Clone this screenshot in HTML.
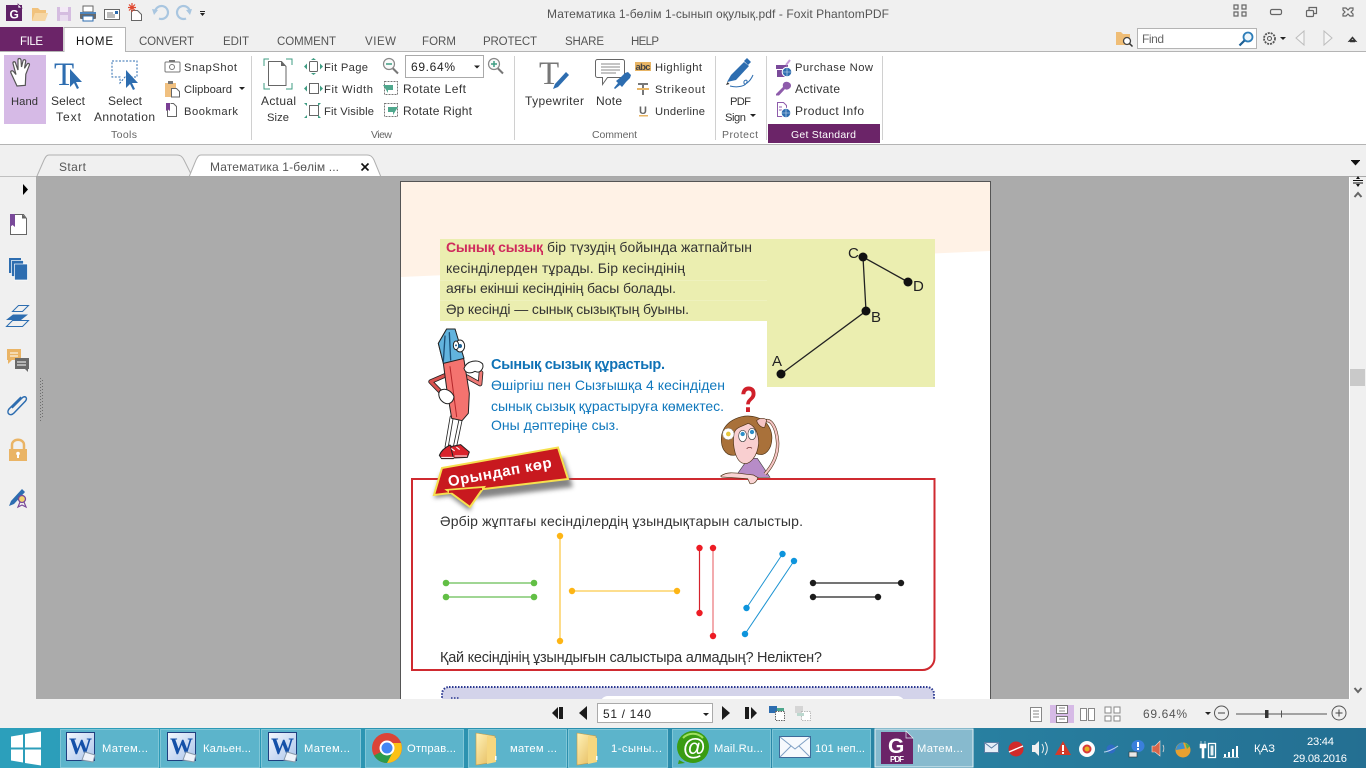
<!DOCTYPE html>
<html><head><meta charset="utf-8"><title>Foxit PhantomPDF</title>
<style>
html,body{margin:0;padding:0;width:1366px;height:768px;overflow:hidden;background:#f0f0f0}
svg{display:block;position:absolute;left:0;top:0}
text{font-family:"Liberation Sans","DejaVu Sans",sans-serif;font-size:12px;fill:#333}
.m{fill:#555;font-size:11.5px}
.n{font-size:11.2px}
.g{fill:#666;font-size:10.5px}
.w{fill:#fff}
.t{font-size:11.2px;fill:#fff}
.d{font-size:14px;fill:#333}
.b{font-size:14px;fill:#1078bd}
.l{fill:none;stroke:#777;stroke-width:1}
</style></head><body>
<svg width="1366" height="768" viewBox="0 0 1366 768" xmlns="http://www.w3.org/2000/svg">
<defs>
<linearGradient id="tb" x1="0" x2="1" y1="0" y2="0"><stop offset="0" stop-color="#2c9fbb"/><stop offset=".5" stop-color="#2b8cab"/><stop offset="1" stop-color="#246f92"/></linearGradient>
<linearGradient id="wd" x1="0" x2="1" y1="0" y2="1"><stop offset="0" stop-color="#f5f8ff"/><stop offset="1" stop-color="#a9c4ea"/></linearGradient>
<linearGradient id="fd" x1="0" x2="1" y1="0" y2="1"><stop offset="0" stop-color="#fff2b8"/><stop offset="1" stop-color="#e3b655"/></linearGradient>
<filter id="bl"><feGaussianBlur stdDeviation="2.5"/></filter>
</defs>

<!-- chrome -->
<rect width="1366" height="768" fill="#f0f0f0"/>
<rect y="52" width="1366" height="92" fill="#fff"/>
<rect y="51" width="1366" height="1" fill="#b4b4b4"/>
<rect y="144" width="1366" height="1" fill="#b4b4b4"/>
<rect x="0" y="27" width="63" height="24" fill="#6b2468"/>
<path d="M64 52V27.500H125.500V52" fill="#fff" stroke="#b4b4b4"/>
<text x="20" y="45" class="w" style="font-size:11.5px" textLength="23">FILE</text>
<text x="76" y="45" textLength="37" style="fill:#111;font-size:11.5px">HOME</text>
<text x="139" y="45" class="m" textLength="55">CONVERT</text>
<text x="223" y="45" class="m" textLength="26">EDIT</text>
<text x="277" y="45" class="m" textLength="59">COMMENT</text>
<text x="365" y="45" class="m" textLength="31">VIEW</text>
<text x="422" y="45" class="m" textLength="34">FORM</text>
<text x="483" y="45" class="m" textLength="54">PROTECT</text>
<text x="565" y="45" class="m" textLength="39">SHARE</text>
<text x="631" y="45" class="m" textLength="28">HELP</text>
<text x="547" y="18" class="m" style="font-size:12px" textLength="342">Математика 1-бөлім 1-сынып оқулық.pdf - Foxit PhantomPDF</text>

<!-- quick access -->
<rect x="6" y="5" width="16" height="16" fill="#5f2166"/><path d="M18 4l4 4h-4z" fill="#fff" stroke="#5f2166" stroke-width=".7"/>
<text x="9.500" y="18.500" style="font-size:12px;font-weight:bold;fill:#fff">G</text>
<path d="M32 21V8h6l2 2h6v3h2l-3 8z" fill="#f1c27d"/><path d="M35 13h13l-3 8H32z" fill="#f6d6a3"/>
<rect x="57" y="7" width="14" height="14" fill="#d5bde0"/><rect x="60" y="7" width="8" height="5" fill="#f3eaf6"/><rect x="60" y="15" width="8" height="6" fill="#e9dcef"/>
<rect x="80" y="12" width="16" height="7" rx="1" fill="#6a6a6a"/><rect x="83" y="6" width="10" height="6" fill="#fff" stroke="#666"/><rect x="83" y="16" width="10" height="5" fill="#fff" stroke="#2d6db0"/><rect x="80" y="12" width="16" height="2" fill="#4d85bd"/>
<rect x="104.500" y="9.500" width="15" height="10" fill="#fff" stroke="#666"/><path d="M107 13h6M107 15h8M107 17h8" stroke="#777"/><rect x="115" y="11" width="3" height="3" fill="#2d6db0"/>
<path d="M131.500 10.500h6l4 4v6h-10z" fill="#fff" stroke="#666"/><path d="M132 3v9M128 7.500h8M129 4.500l6 6M135 4.500l-6 6" stroke="#e0472f" stroke-width="1.200"/>
<path d="M155 12a6.500 6.500 0 1 1 4 6.500" fill="none" stroke="#a9c6e0" stroke-width="2.200"/><path d="M152 9l6 1-4 5z" fill="#a9c6e0"/>
<path d="M190 12a6.500 6.500 0 1 0-4 6.500" fill="none" stroke="#a9c6e0" stroke-width="2.200"/><path d="M192 9l-6 1 4 5z" fill="#a9c6e0"/>
<path d="M200 11h5v1h-5zM200 13h5l-2.500 3z" fill="#222"/>

<!-- window buttons -->
<g fill="none" stroke="#666" stroke-width="1.200">
<path d="M1234 5h4v4h-4zM1242 5h4v4h-4zM1234 12h4v4h-4zM1242 12h4v4h-4z"/>
<rect x="1270.500" y="9.500" width="11" height="5" rx="1.500"/>
<rect x="1306.500" y="10.500" width="7" height="6" rx="1"/><path d="M1309 10V7.500h7.500v6H1314"/>
<path d="M1343 8h3l2 2 2-2h3v2l-2 2 2 2v2h-3l-2-2-2 2h-3v-2l2-2-2-2z"/>
</g>
<!-- find -->
<path d="M1116 45V32h5l2 2h7v11z" fill="#efbd76"/><circle cx="1127" cy="41" r="3.500" fill="#fff" stroke="#444" stroke-width="1.300"/><path d="M1129.500 43.500l3 3" stroke="#333" stroke-width="1.500"/>
<rect x="1137.500" y="28.500" width="119" height="20" fill="#fff" stroke="#b4b4b4"/>
<text x="1142" y="43" style="fill:#666" textLength="22">Find</text>
<circle cx="1248" cy="37" r="4.500" fill="#eef6fb" stroke="#2d7db8" stroke-width="1.800"/><path d="M1244.500 40.500l-5 5" stroke="#1c5f94" stroke-width="2.200"/>
<circle cx="1269.500" cy="38.500" r="5.500" fill="none" stroke="#555" stroke-width="1.800" stroke-dasharray="2 1"/><circle cx="1269.500" cy="38.500" r="2" fill="none" stroke="#555"/>
<path d="M1280 37h6l-3 3z" fill="#222"/>
<path d="M1304 31l-8 7 8 7z" fill="#f5f5f5" stroke="#bdbdbd"/><path d="M1324 31l8 7-8 7z" fill="#f5f5f5" stroke="#bdbdbd"/>
<path d="M1349.500 41l3-3.500 3 3.500-3-.5z M1350 41.500h5" fill="none" stroke="#333" stroke-width="1.500"/>

<!-- ribbon Hand -->
<rect x="4" y="55" width="42" height="69" fill="#d6bae6"/>
<path d="M17 86l-6-13c-1-2 1-3 2.500-1.500l2.500 3-3-11c-.3-2 2-2.500 2.500-.5l2.500 7V60c0-2 2.500-2 3 0l.5 7 1.500-6c.5-2 3-1.500 2.700.3l-1.200 7 2.500-4c1-1.700 3-.7 2.300 1l-3.500 9-.5 11z" fill="#fff" stroke="#555" stroke-width="1.200"/>
<text x="11" y="105" class="n" textLength="27">Hand</text>
<text x="54" y="85" style="font-family:'Liberation Serif',serif;font-size:33px;fill:#2d6db0">T</text>
<path d="M70 69v18l4-4 3 6 2-1-3-6h6z" fill="#2d6db0"/>
<text x="51" y="105" textLength="34">Select</text><text x="56" y="121" textLength="25">Text</text>
<path d="M112 61h25v16h-12l-5 6v-6h-8z" fill="none" stroke="#2d6db0" stroke-dasharray="2 1.500"/>
<path d="M126 70v18l4-4 3 6 2-1-3-6h6z" fill="#2d6db0"/>
<text x="108" y="105" textLength="34">Select</text><text x="94" y="121" textLength="61">Annotation</text>
<rect x="165" y="62" width="15" height="10" rx="1" fill="none" stroke="#777"/><rect x="169" y="60" width="6" height="2" fill="#777"/><circle cx="172" cy="67" r="2.500" fill="none" stroke="#777"/>
<text x="184" y="71" class="n" textLength="53">SnapShot</text>
<rect x="165" y="83" width="11" height="14" fill="#f0c080"/><rect x="168" y="81" width="5" height="3" fill="#777"/><path d="M171.500 88.500h5l3 3v5.500h-8z" fill="#fff" stroke="#666"/>
<text x="184" y="93" class="n" textLength="48">Clipboard</text><path d="M239 87h6l-3 3z" fill="#222"/>
<path d="M170.500 103.500h3l3 3v10h-9v-10" fill="#fff" stroke="#666"/><path d="M166 103h4v8l-2-1.500-2 1.500z" fill="#7a3f94"/>
<text x="184" y="115" class="n" textLength="54">Bookmark</text>
<text x="111" y="138" class="g" textLength="26">Tools</text>
<rect x="251" y="56" width="1" height="84" fill="#d0d0d0"/>

<!-- View -->
<path d="M264 66v-7h5M286 59h6v6M264 83v6h6M286 89h6v-6" fill="none" stroke="#3f9d83"/>
<path d="M268.500 61.500h13l4.500 5v19h-17.500z" fill="#fff" stroke="#666"/><path d="M281 61l5 5h-5z" fill="#666"/>
<text x="261" y="105" textLength="35">Actual</text><text x="267" y="121" class="n" textLength="22">Size</text>
<rect x="309.500" y="61.500" width="8" height="10" rx="1" fill="#fff" stroke="#666"/><path d="M304 66.500l3-3v6zM323 66.500l-3-3v6zM313.500 58l-2.500 2h5zM313.500 75l-2.500-2h5z" fill="#3f9d83"/>
<text x="324" y="71" class="n" textLength="44">Fit Page</text>
<rect x="309.500" y="83.500" width="9" height="10" fill="#fff" stroke="#666"/><path d="M304 88.500l3-3v6zM323 88.500l-3-3v6z" fill="#3f9d83"/>
<text x="324" y="93" class="n" textLength="49">Fit Width</text>
<rect x="309.500" y="105.500" width="9" height="10" fill="#fff" stroke="#666"/><path d="M304 103h3v3zM321 103h-3v3zM304 118h3v-3zM321 118h-3v-3z" fill="#3f9d83"/>
<text x="324" y="115" class="n" textLength="50">Fit Visible</text>
<circle cx="389" cy="64" r="5.500" fill="#fafafa" stroke="#888" stroke-width="1.200"/><path d="M386 64h6" stroke="#3f9d83" stroke-width="1.500"/><path d="M393 68.500l5 5" stroke="#777" stroke-width="2"/>
<rect x="405.500" y="55.500" width="78" height="22" fill="#fff" stroke="#aaa"/>
<text x="411" y="71" textLength="44" style="fill:#222">69.64%</text><path d="M474 65.500h6l-3 3z" fill="#222"/>
<circle cx="494" cy="64" r="5.500" fill="#fafafa" stroke="#888" stroke-width="1.200"/><path d="M491 64h6M494 61v6" stroke="#3f9d83" stroke-width="1.500"/><path d="M498 68.500l5 5" stroke="#777" stroke-width="2"/>
<rect x="384.500" y="81.500" width="13" height="13" fill="#fff" stroke="#777" stroke-dasharray="2 1"/><path d="M383 85h10v5h-5v3z" fill="#4fa78d"/>
<text x="403" y="93" textLength="63">Rotate Left</text>
<rect x="384.500" y="103.500" width="13" height="13" fill="#fff" stroke="#777" stroke-dasharray="2 1"/><path d="M398 107h-10v5h5v3z" fill="#4fa78d"/>
<text x="403" y="115" textLength="69">Rotate Right</text>
<text x="371" y="138" class="g" textLength="21">View</text>
<rect x="514" y="56" width="1" height="84" fill="#d0d0d0"/>

<!-- Comment -->
<text x="539" y="84" style="font-family:'Liberation Serif',serif;font-size:33px;fill:#777">T</text>
<path d="M553 89l2-5 11-12 3 3-11 12z" fill="#2d6db0"/>
<text x="525" y="105" textLength="59">Typewriter</text>
<path d="M596.500 59.500h25a2 2 0 0 1 2 2v14a2 2 0 0 1-2 2h-15l-5 7v-7h-5a2 2 0 0 1-2-2v-14a2 2 0 0 1 2-2z" fill="#fff" stroke="#666" transform="translate(1 0)"/>
<path d="M601 64h19M601 67h19M601 70h19M601 73h15" stroke="#888"/>
<path d="M614 88l4-5-2-2 5-4 4-4 3-1 3 3-1 3-4 4-4 5-2-2-5 4z" fill="#2d6db0"/>
<text x="596" y="105" textLength="26">Note</text>
<rect x="635" y="62" width="16" height="9" fill="#e8b565"/><text x="635.500" y="70" style="font-size:9.500px;font-weight:bold;fill:#444" textLength="15">abc</text>
<text x="655" y="71" class="n" textLength="47">Highlight</text>
<path d="M638 83h10v2h-4v10h-2V85h-4z" fill="#777"/><rect x="637" y="88" width="12" height="2" fill="#e8b565"/>
<text x="655" y="93" class="n" textLength="50">Strikeout</text>
<text x="639" y="114" style="font-size:11px;font-weight:bold;fill:#666">U</text><rect x="639" y="115" width="9" height="1.500" fill="#e8b565"/>
<text x="655" y="115" class="n" textLength="50">Underline</text>
<text x="592" y="138" class="g" textLength="45">Comment</text>
<rect x="715" y="56" width="1" height="84" fill="#d0d0d0"/>

<!-- Protect -->
<path d="M727 82l4-7 13-13 5 4-13 14z" fill="#2d6db0"/><path d="M744 61l3-3 4 4-3 3z" fill="#2d6db0"/><path d="M726 85l1.500-3 2 2z" fill="#333"/>
<path d="M730 86c8 2 16 0 17-4 1-3-4-2-3 1 0 3 6-1 9-8" fill="none" stroke="#2d6db0" stroke-width="1"/>
<text x="730" y="105" class="n" textLength="21">PDF</text><text x="725" y="121" class="n" textLength="21">Sign</text><path d="M750 114h6l-3 3z" fill="#222"/>
<text x="722" y="138" class="g" textLength="36">Protect</text>
<rect x="766" y="56" width="1" height="84" fill="#d0d0d0"/>

<!-- Purchase -->
<rect x="776" y="65" width="12" height="4" fill="#7a4a9a"/><rect x="777" y="70" width="11" height="7" fill="#7a4a9a"/><path d="M786 65l4-5" stroke="#c39ad6" stroke-width="2"/>
<circle cx="787" cy="72" r="4.800" fill="#2d6db0" stroke="#fff"/><path d="M782.500 72h9M787 67.500v9" stroke="#cfe0f2" stroke-width=".6"/>
<text x="795" y="71" class="n" textLength="78">Purchase Now</text>
<path d="M776 94l7-7c-1-4 2-6 5-5s4 4 2 6-4 2-5 1l-6 6.500h-3z" fill="#8e5cab"/>
<text x="795" y="93" textLength="45">Activate</text>
<path d="M777.500 102.500h6l3 3v11h-9z" fill="#fff" stroke="#8e5cab"/><path d="M779 107h3M779 110h3" stroke="#8e5cab"/>
<circle cx="786" cy="113" r="4.800" fill="#2d6db0" stroke="#fff"/><path d="M781.500 113h9M786 108.500v9" stroke="#cfe0f2" stroke-width=".6"/>
<text x="795" y="115" textLength="69">Product Info</text>
<rect x="768" y="124" width="112" height="19" fill="#6b2468"/>
<text x="791" y="138" class="w" textLength="65" style="font-size:10.5px">Get Standard</text>
<rect x="882" y="56" width="1" height="84" fill="#d0d0d0"/>

<!-- doc tabs -->
<path d="M37 176l7-16c2-4 3-5 5-5h128c3 0 5 1 7 5l8 16" fill="#f0f0f0" stroke="#b0b0b0"/>
<path d="M189 177l7-17c2-4 3-5 5-5h166c3 0 5 1 7 5l7 17z" fill="#fff" stroke="#b0b0b0"/>
<text x="59" y="171" class="m" style="font-size:12px" textLength="27">Start</text>
<text x="210" y="171" class="m" style="font-size:12px" textLength="129">Математика 1-бөлім ...</text>
<path d="M361.500 163.500l7 7M368.500 163.500l-7 7" stroke="#111" stroke-width="1.600"/>
<path d="M1351 160.500h9l-4.500 5z" fill="#111"/><rect x="1351" y="160" width="9" height="1" fill="#111"/>

<!-- doc area -->
<rect x="36" y="177" width="1313" height="522" fill="#ababab"/>
<rect x="1349" y="177" width="1" height="522" fill="#fff"/>
<rect x="0" y="176" width="36" height="1" fill="#c0c0c0"/>
<rect x="36" y="176" width="1330" height="1" fill="#a8a8a8"/>
<path d="M1353 180.500h10M1353 183h10" stroke="#111"/><path d="M1358 176l-2 3h4zM1358 187l-2-3h4z" fill="#111"/>
<path d="M1354.500 197l3.500-4 3.500 4" fill="none" stroke="#666" stroke-width="2"/>
<rect x="1350" y="369" width="15" height="17" fill="#c9c9c9"/>
<path d="M1354.500 688l3.500 4 3.500-4" fill="none" stroke="#666" stroke-width="2"/>
<path d="M40.500 378v43M42.500 380v39" stroke="#6f6f6f" stroke-dasharray="1 2"/>

<!-- left icons -->
<path d="M23 184l5 5.500-5 5.500z" fill="#000"/>
<path d="M10.500 214.500h13l3 4v16h-16z" fill="#fff" stroke="#666"/><path d="M22 214l4.500 4.500H22z" fill="#666"/><path d="M10 214h5v13l-2.500-2-2.500 2z" fill="#7a4a9a"/>
<rect x="9" y="258" width="12" height="15" fill="#2d6db0"/><rect x="11.500" y="260.500" width="12" height="16" fill="#2d6db0" stroke="#fff" stroke-width=".7"/><rect x="14.500" y="264" width="13" height="16" fill="#2d6db0" stroke="#fff" stroke-width=".7"/>
<path d="M7 320l7-5.500h15l-7 5.500z" fill="#2d6db0" transform="translate(-1 0)"/>
<path d="M12.500 311.500l6-6h10l-6 6zM6.500 326.500l6-6h16l-6 6z" fill="none" stroke="#2d6db0" stroke-width="1"/>
<rect x="7" y="349" width="14" height="11" fill="#eab465"/><path d="M8 360v4l4-4z" fill="#eab465"/><path d="M10 353h8M10 356h8" stroke="#fff"/>
<rect x="15" y="358" width="14" height="11" fill="#6a6a6a"/><path d="M25 369l3 3v-3z" fill="#6a6a6a"/><path d="M17 362h9M17 365h9" stroke="#fff"/>
<path d="M12 407l10-10c3-3 6 0 3.500 3L14 412c-4 4-8 0-5-4l12-12" fill="none" stroke="#2d6db0" stroke-width="1.500" transform="translate(0 1)"/>
<rect x="9" y="449" width="18" height="12" fill="#eab465"/><path d="M12 449v-4c0-7 12-7 12 0v4" fill="none" stroke="#eab465" stroke-width="2.500"/><circle cx="18" cy="453.500" r="1.800" fill="#fff"/><rect x="17" y="454" width="2" height="4" fill="#fff"/>
<path d="M9 506l2-5 11-12 3 3-11 12z" fill="#2d6db0"/><circle cx="22" cy="499" r="3.500" fill="#f3d26d" stroke="#7a4a9a" stroke-width="1.300"/><path d="M20 502l-2 5 4-2 4 2-2-5" fill="none" stroke="#7a4a9a" stroke-width="1.200"/>

<!-- PDF page -->
<rect x="400.500" y="181.500" width="590" height="540" fill="#fff" stroke="#555"/>
<path d="M401 182H990V251L401 277z" fill="#fff2e6"/>
<path d="M440 239H935V387H767V321H440z" fill="#ebeeb0"/>
<path d="M440 280.500H767M440 300.500H767" stroke="#f1f3c9" stroke-width=".6"/>
<text x="446" y="252" style="font-size:14px;font-weight:bold;fill:#cf2a5c" textLength="97">Сынық сызық</text>
<text x="547" y="252" class="d" textLength="205">бір түзудің бойында жатпайтын</text>
<text x="446" y="273" class="d" textLength="239">кесінділерден тұрады. Бір кесіндінің</text>
<text x="446" y="293" class="d" textLength="230">аяғы екінші кесіндінің басы болады.</text>
<text x="446" y="314" class="d" textLength="243">Әр кесінді — сынық сызықтың буыны.</text>
<path d="M781 374L866 311L863 257L908 282" fill="none" stroke="#222" stroke-width="1.300"/>
<g fill="#111"><circle cx="781" cy="374" r="4.500"/><circle cx="866" cy="311" r="4.500"/><circle cx="863" cy="257" r="4.500"/><circle cx="908" cy="282" r="4.500"/></g>
<text x="848" y="258" style="font-size:15px;fill:#222">C</text>
<text x="913" y="291" style="font-size:15px;fill:#222">D</text>
<text x="871" y="322" style="font-size:15px;fill:#222">B</text>
<text x="772" y="366" style="font-size:15px;fill:#222">A</text>

<text x="491" y="369" style="font-size:14.500px;font-weight:bold;fill:#0f72b6" textLength="174">Сынық сызық құрастыр.</text>
<text x="491" y="390" class="b" textLength="234">Өшіргіш пен Сызғышқа 4 кесіндіден</text>
<text x="491" y="411" class="b" textLength="233">сынық сызық құрастыруға көмектес.</text>
<text x="491" y="430" class="b" textLength="128">Оны дәптеріңе сыз.</text>

<!-- eraser character (zoom coords) -->
<g transform="translate(400 180) scale(.33333)" stroke-linejoin="round" stroke-linecap="round">
<path d="M155 712L140 800M182 718L165 800" fill="none" stroke="#222" stroke-width="12"/>
<path d="M155 712L140 800M182 718L165 800" fill="none" stroke="#fff" stroke-width="7"/>
<path d="M118 826C125 808 140 800 150 795L166 812L160 836L125 836Z" fill="#d9232c" stroke="#222" stroke-width="3"/>
<path d="M152 800L182 794L208 816L202 832L160 834Z" fill="#d9232c" stroke="#222" stroke-width="3"/>
<path d="M125 832H160M165 828H200M155 806l8 6M170 802l8 6" stroke="#fff" stroke-width="3" fill="none"/>
<path d="M138 585L92 605L128 642" fill="none" stroke="#222" stroke-width="14"/>
<path d="M138 585L92 605L128 642" fill="none" stroke="#d9524f" stroke-width="9"/>
<path d="M200 590L240 612L243 578" fill="none" stroke="#222" stroke-width="14"/>
<path d="M200 590L240 612L243 578" fill="none" stroke="#ef7a76" stroke-width="9"/>
<path d="M115 490L140 447L165 447L192 540L208 640L205 700L186 722L155 715L140 625L130 550Z" fill="#f4736f" stroke="#222" stroke-width="3"/>
<path d="M150 560L170 710" fill="none" stroke="#b3262a" stroke-width="3"/>
<path d="M115 490L140 447L165 447L192 535L130 550Z" fill="#62b3dd" stroke="#222" stroke-width="3"/>
<path d="M135 468L130 545M148 458L152 540" fill="none" stroke="#1a4f78" stroke-width="4"/>
<ellipse cx="180" cy="498" rx="14" ry="18" fill="#fff" stroke="#222" stroke-width="3"/>
<ellipse cx="168" cy="496" rx="8" ry="13" fill="#fff" stroke="#222" stroke-width="3"/>
<circle cx="180" cy="498" r="6" fill="#1d5e90"/><circle cx="168" cy="496" r="3" fill="#1d5e90"/>
<path d="M192 565C200 542 235 536 248 552C252 566 240 582 225 574C212 582 195 580 192 565Z" fill="#fff" stroke="#222" stroke-width="3"/>
<path d="M120 632C135 622 155 632 162 650C160 668 145 676 132 668C118 660 112 642 120 632Z" fill="#fff" stroke="#222" stroke-width="3"/>
</g>

<!-- girl (zoom coords) -->
<text transform="translate(740 412) scale(.78 1)" style="font-size:36px;font-weight:bold;fill:#d0202a">?</text>
<g transform="translate(400 180) scale(.33333)" stroke-linejoin="round">
<path d="M1045 835L1005 892H1110L1072 835Z" fill="#b78cc8" stroke="#444" stroke-width="2"/>
<path d="M965 765C975 718 1030 700 1070 712C1112 725 1122 765 1112 798C1100 828 1080 826 1068 820L1000 826C975 826 960 802 965 765Z" fill="#a9713a" stroke="#4f3418" stroke-width="2"/>
<path d="M1002 762C1005 742 1025 740 1045 730C1065 738 1076 760 1076 790C1072 830 1050 855 1030 850C1008 845 996 800 1002 762Z" fill="#f9cfd0" stroke="#4f3418" stroke-width="2"/>
<ellipse cx="1028" cy="768" rx="12" ry="17" fill="#fff" stroke="#444" stroke-width="2"/>
<ellipse cx="1056" cy="762" rx="12" ry="17" fill="#fff" stroke="#444" stroke-width="2"/>
<circle cx="1028" cy="762" r="6.500" fill="#2d8fc8"/><circle cx="1056" cy="756" r="6.500" fill="#2d8fc8"/>
<path d="M1040 806c5-5 12-5 16-1" fill="none" stroke="#733" stroke-width="2.500"/>
<circle cx="985" cy="762" r="17" fill="#fff" stroke="#888" stroke-width="2" stroke-dasharray="6 3"/><circle cx="985" cy="762" r="7" fill="#e7c83c"/>
<path d="M1082 735C1108 700 1130 740 1133 790C1133 830 1115 860 1095 882" fill="none" stroke="#4f3418" stroke-width="10"/>
<path d="M1082 735C1108 700 1130 740 1133 790C1133 830 1115 860 1095 882" fill="none" stroke="#f5c4c4" stroke-width="6.500"/>
<path d="M1070 722c8-8 22-10 30-2l-6 22c-8 2-20-6-24-20z" fill="#f5c4c4" stroke="#4f3418" stroke-width="2"/>
</g>

<!-- red box -->
<path d="M412 479H934.500V658a12 12 0 0 1-12 12H412z" fill="#fff" stroke="#cf2a30" stroke-width="2"/>
<g transform="translate(400 180) scale(.33333)">
<path d="M962 888C985 872 1010 880 1060 885L1074 893C1070 905 1062 913 1050 911L1043 896L965 891Z" fill="#f9d4d4" stroke="#4f3418" stroke-width="2"/>
</g>
<path d="M441 474l122-17 10 30-100 12-3 12-20-15-16 2z" fill="#666" filter="url(#bl)" opacity=".8"/>
<path d="M442 468L558 447.500L568 479L434 495z" fill="#c8191f" stroke="#f6e04f" stroke-width="2"/>
<path d="M447 490L484 487L470 507z" fill="#c8191f" stroke="#f6e04f" stroke-width="2"/>
<path d="M449 490.500L482 488L482 490L449 493z" fill="#c8191f"/>
<text transform="translate(449 486.500) rotate(-10.500)" style="font-size:15px;font-weight:bold;fill:#fff" textLength="105">Орындап көр</text>

<text x="440" y="526" class="d" textLength="363">Әрбір жұптағы кесінділердің ұзындықтарын салыстыр.</text>
<text x="440" y="662" class="d" style="font-size:14.500px" textLength="382">Қай кесіндінің ұзындығын салыстыра алмадың? Неліктен?</text>
<g stroke="#68bd53" stroke-width="1.200"><path d="M446 583H534M446 597H534"/></g>
<g fill="#62bf45"><circle cx="446" cy="583" r="3.300"/><circle cx="534" cy="583" r="3.300"/><circle cx="446" cy="597" r="3.300"/><circle cx="534" cy="597" r="3.300"/></g>
<g stroke="#fcc94a" stroke-width="1.300"><path d="M560 536V641M572 591H677"/></g>
<g fill="#fdb515"><circle cx="560" cy="536" r="3.200"/><circle cx="560" cy="641" r="3.200"/><circle cx="572" cy="591" r="3.200"/><circle cx="677" cy="591" r="3.200"/></g>
<path d="M699.500 548V613" stroke="#d4222c" stroke-width="1.200"/><path d="M713 548V636" stroke="#ef8f93" stroke-width="1.500"/>
<g fill="#ed1c24"><circle cx="699.500" cy="548" r="3.200"/><circle cx="699.500" cy="613" r="3.200"/><circle cx="713" cy="548" r="3.200"/><circle cx="713" cy="636" r="3.200"/></g>
<path d="M782.500 554L746.500 608M794 561L745 634" stroke="#1d94d2" stroke-width="1"/>
<g fill="#0d94dc"><circle cx="782.500" cy="554" r="3.200"/><circle cx="746.500" cy="608" r="3.200"/><circle cx="794" cy="561" r="3.200"/><circle cx="745" cy="634" r="3.200"/></g>
<path d="M813 583H901M813 597H878" stroke="#222" stroke-width="1.200"/>
<g fill="#1b1b1b"><circle cx="813" cy="583" r="3.200"/><circle cx="901" cy="583" r="3.200"/><circle cx="813" cy="597" r="3.200"/><circle cx="878" cy="597" r="3.200"/></g>

<!-- lavender box -->
<rect x="442" y="687" width="492" height="30" rx="7" fill="#d3d3ea" stroke="#2b3990" stroke-width="2" stroke-dasharray="1.500 1.500"/>
<rect x="600" y="696" width="305" height="20" rx="8" fill="#fff"/>
<path d="M451 698h8" stroke="#2b3990" stroke-width="1.500" stroke-dasharray="1.500 1.500"/>

<!-- bottom bar -->
<rect x="0" y="699" width="1366" height="29" fill="#f0f0f0"/>
<path d="M558 707v12l-6-6zM559 707h4v12h-4z" fill="#1b1b1b"/>
<path d="M587 706v14l-8-7z" fill="#1b1b1b"/>
<rect x="597.500" y="703.500" width="115" height="19" fill="#fff" stroke="#aaa"/>
<text x="603" y="718" textLength="48" style="fill:#222">51 / 140</text>
<path d="M703 713h6l-3 3z" fill="#222"/>
<path d="M722 706v14l8-7z" fill="#1b1b1b"/>
<path d="M745 707h4v12h-4zM751 707v12l6-6z" fill="#1b1b1b"/>
<g>
<rect x="769" y="706" width="8" height="7" fill="#2d6db0"/><rect x="775.500" y="711.500" width="9" height="9" fill="#fff" stroke="#666" stroke-dasharray="1.500 1"/><path d="M777 708h7v3h-7z" fill="#4fa78d"/>
<rect x="795" y="706" width="8" height="7" fill="#d5d5d5"/><rect x="801.500" y="711.500" width="9" height="9" fill="#fff" stroke="#bbb" stroke-dasharray="1.500 1"/><rect x="797" y="713" width="7" height="3" fill="#bcd8cf"/>
</g>
<rect x="1030.500" y="707.500" width="11" height="14" fill="#fff" stroke="#888"/><path d="M1033 711h6M1033 714h6M1033 717h6" stroke="#888"/>
<rect x="1050" y="705" width="24" height="18" fill="#d6bae6"/>
<path d="M1056.500 705.500h11v8h-11zM1056.500 716.500h11v6h-11z" fill="#fff" stroke="#777"/><path d="M1059 708h6M1059 711h6M1059 719h6" stroke="#888"/>
<rect x="1080.500" y="708.500" width="6" height="12" fill="#fff" stroke="#888"/><rect x="1088.500" y="708.500" width="6" height="12" fill="#fff" stroke="#888"/>
<path d="M1105 707h6v6h-6zM1114 707h6v6h-6zM1105 716h6v5h-6zM1114 716h6v5h-6z" fill="#fff" stroke="#888"/>
<text x="1143" y="718" class="m" style="font-size:12px" textLength="44">69.64%</text>
<path d="M1205 712h6l-3 3z" fill="#222"/>
<circle cx="1221.500" cy="713" r="7" fill="none" stroke="#555"/><path d="M1218 713h7" stroke="#444"/>
<path d="M1236 714H1327" stroke="#555"/><rect x="1265" y="710" width="3.500" height="8" fill="#333"/><path d="M1281.500 710.500v7" stroke="#555"/>
<circle cx="1339" cy="713" r="7" fill="none" stroke="#555"/><path d="M1335.500 713h7M1339 709.500v7" stroke="#444"/>

<!-- taskbar -->
<rect x="0" y="728" width="1366" height="40" fill="url(#tb)"/>
<path d="M11 737l12-2v13H11zM25 734.500l16-2.500v16H25zM11 750h12v13l-12-2zM25 750h16v16l-16-2.500z" fill="#fff" transform="translate(0 -.5)"/>
<g fill="#5cb4cb" stroke="#7fc6d7">
<rect x="60.500" y="729.500" width="98" height="38"/>
<rect x="160.500" y="729.500" width="99" height="38"/>
<rect x="261.500" y="729.500" width="99" height="38"/>
<rect x="365.500" y="729.500" width="98" height="38"/>
<rect x="468.500" y="729.500" width="98" height="38"/>
<rect x="568.500" y="729.500" width="99" height="38"/>
<rect x="672.500" y="729.500" width="98" height="38"/>
<rect x="772.500" y="729.500" width="98" height="38"/>
</g>
<rect x="875" y="729" width="98" height="38" fill="#87bace" stroke="#e6f2f6"/>

<!-- word icons -->
<g><rect x="66.500" y="732.500" width="28" height="28" fill="url(#wd)" stroke="#1f3f80"/><text x="69" y="754" style="font-size:23px;font-weight:bold;fill:#1450a8;font-family:'Liberation Serif',serif">W</text><path d="M85 752l10 3-2 7-11-2z" fill="#eef3fa" stroke="#89a"/></g>
<g transform="translate(101 0)"><rect x="66.500" y="732.500" width="28" height="28" fill="url(#wd)" stroke="#1f3f80"/><text x="69" y="754" style="font-size:23px;font-weight:bold;fill:#1450a8;font-family:'Liberation Serif',serif">W</text><path d="M85 752l10 3-2 7-11-2z" fill="#eef3fa" stroke="#89a"/></g>
<g transform="translate(202 0)"><rect x="66.500" y="732.500" width="28" height="28" fill="url(#wd)" stroke="#1f3f80"/><text x="69" y="754" style="font-size:23px;font-weight:bold;fill:#1450a8;font-family:'Liberation Serif',serif">W</text><path d="M85 752l10 3-2 7-11-2z" fill="#eef3fa" stroke="#89a"/></g>
<text x="102" y="752" class="t" textLength="46">Матем...</text>
<text x="203" y="752" class="t" textLength="48">Кальен...</text>
<text x="304" y="752" class="t" textLength="46">Матем...</text>
<!-- chrome -->
<circle cx="387" cy="748" r="15" fill="#db4437"/>
<path d="M387 763A15 15 0 0 0 401 743H387z" fill="#fbc116"/>
<path d="M387 763l7-13-2-2h-5l-6 4-7 3.500A15 15 0 0 0 387 763z" fill="#2b9b4b"/>
<circle cx="387" cy="748" r="6.500" fill="#4285f4" stroke="#fff" stroke-width="2"/>
<text x="407" y="752" class="t" textLength="49">Отправ...</text>
<!-- folders -->
<g><path d="M476 733l19 3v26l-19 3z" fill="url(#fd)" stroke="#c49a44" stroke-width=".6"/><path d="M487 736l9 2v24l-9 2z" fill="#f6d77f"/><rect x="495" y="756" width="1.500" height="4" fill="#fff"/></g>
<g transform="translate(101 0)"><path d="M476 733l19 3v26l-19 3z" fill="url(#fd)" stroke="#c49a44" stroke-width=".6"/><path d="M487 736l9 2v24l-9 2z" fill="#f6d77f"/><rect x="495" y="756" width="1.500" height="4" fill="#fff"/></g>
<text x="510" y="752" class="t" textLength="47">матем ...</text>
<text x="611" y="752" class="t" textLength="51">1-сыны...</text>
<!-- mail.ru -->
<circle cx="693" cy="747" r="16" fill="#3a9c12"/><path d="M679 760l-1 4 7-1z" fill="#3a9c12"/>
<path d="M683 738a14 14 0 0 1 20 0" fill="none" stroke="#9fe05e" stroke-width="2"/>
<text x="683" y="755" style="font-size:23px;font-weight:bold;fill:#fff">@</text>
<text x="714" y="752" class="t" textLength="49">Mail.Ru...</text>
<!-- envelope -->
<rect x="779.500" y="736.500" width="31" height="21" fill="#f6f9fd" stroke="#3e6a99"/><path d="M780 737l15 12 15-12M780 757l11-11M810 757l-11-11" fill="none" stroke="#7fa0c4"/>
<text x="815" y="752" class="t" textLength="50">101 неп...</text>
<!-- foxit -->
<path d="M881 732h25l7 7v25h-32z" fill="#6b2468"/><path d="M906 731v7h7z" fill="#6b2468" stroke="#e6f2f6" stroke-width=".7"/>
<text x="888" y="753" style="font-size:21px;font-weight:bold;fill:#fff">G</text>
<text x="890" y="762" style="font-size:8px;font-weight:bold;fill:#fff" textLength="14">PDF</text>
<text x="917" y="752" class="t" textLength="46">Матем...</text>

<!-- tray -->
<rect x="984.500" y="742.500" width="14" height="10" fill="#e6eef7" stroke="#5b7fa5"/><path d="M985 743l6.500 5 6.500-5" fill="none" stroke="#5b7fa5"/>
<circle cx="1016" cy="749" r="7.500" fill="#d12a2a"/><path d="M1009 752l14-6" stroke="#fff" stroke-width="1.400"/>
<path d="M1032 745h3l4-4v15l-4-4h-3z" fill="#f0f0f0"/><path d="M1042 744c2 3 2 6 0 9M1045 742c3 4 3 9 0 13" fill="none" stroke="#eee" stroke-width="1"/>
<path d="M1063 741l8 14h-16z" fill="#d43a2a"/><rect x="1062" y="745" width="2" height="6" fill="#fff"/><rect x="1062" y="752" width="2" height="2" fill="#fff"/>
<circle cx="1087" cy="749" r="8" fill="#fdfdfd"/><circle cx="1087" cy="749" r="3.500" fill="#e8b020" stroke="#d93a3a" stroke-width="2"/>
<ellipse cx="1111" cy="749" rx="4.500" ry="4.500" fill="#2f6bc4"/><path d="M1104 752c3 0 10-3 14-6" fill="none" stroke="#bcd4f0"/>
<ellipse cx="1138" cy="746" rx="6.500" ry="6" fill="#3a7fdc"/><rect x="1137" y="742" width="2" height="5" fill="#fff"/><rect x="1137" y="748" width="2" height="2" fill="#fff"/><rect x="1129" y="752" width="8" height="5" fill="#e8e8e8" stroke="#333" stroke-width=".6"/>
<path d="M1152 746h3l5-5v15l-5-4h-3z" fill="#d9664a" stroke="#f3e1d6" stroke-width=".6"/><path d="M1163 745c1 2 1 5 0 7" fill="none" stroke="#ccc"/>
<circle cx="1183" cy="750" r="7.500" fill="#e8a030"/><path d="M1176 750a7.500 7.500 0 0 1 7-7.500l2 6z" fill="#3a8fd0"/><path d="M1185 743l5 3-3 3z" fill="#4faf4f"/>
<path d="M1201 744v-3M1205 744v-3M1200 744h6v4h-2v10h-2v-10h-2z" fill="#fff" stroke="#fff" stroke-width=".6"/>
<rect x="1208.500" y="743.500" width="7" height="14" fill="#1d6d8e" stroke="#fff" stroke-width="1.300"/><rect x="1210.500" y="745.500" width="3" height="10" fill="#fff" opacity=".9"/>
<path d="M1224 754h2v3h-2zM1228 752h2v5h-2zM1232 749h2v8h-2zM1236 746h2v11h-2z" fill="#fff"/><rect x="1223" y="757" width="16" height=".6" fill="#fff"/>
<text x="1254" y="752" class="t" textLength="21">ҚАЗ</text>
<text x="1307" y="745" class="t" textLength="27">23:44</text>
<text x="1293" y="762" class="t" textLength="54">29.08.2016</text>
</svg>
</body></html>
